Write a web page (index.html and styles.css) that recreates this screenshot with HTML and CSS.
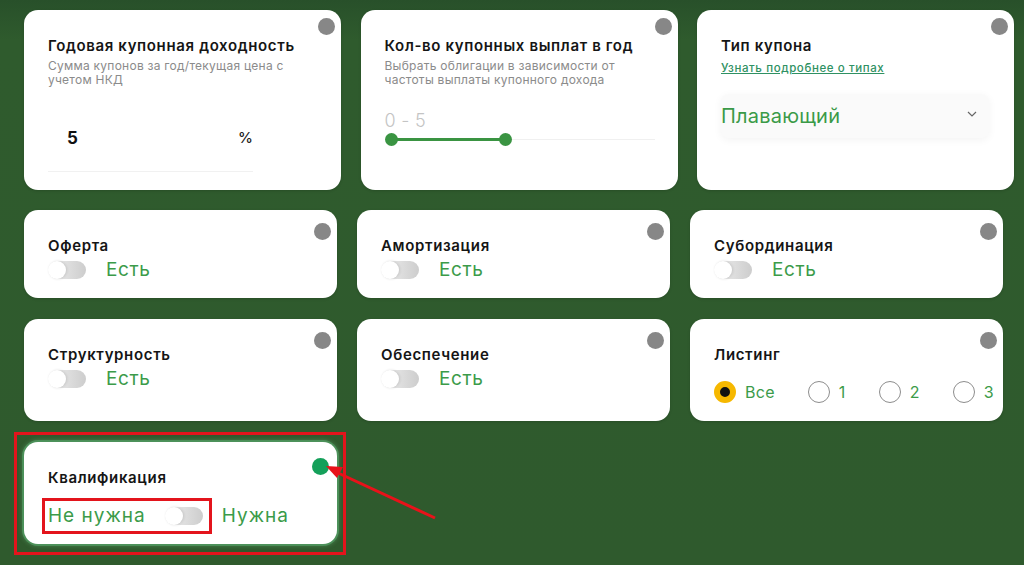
FILE: index.html
```html
<!DOCTYPE html>
<html lang="ru">
<head>
<meta charset="utf-8">
<title>Фильтры облигаций</title>
<link rel="stylesheet" href="styles.css">
</head>
<body>
<main class="page">
  <section class="row row-top">
    <div class="card card-tall">
      <span class="dot"></span>
      <h3 class="title">Годовая купонная доходность</h3>
      <p class="sub">Сумма купонов за год/текущая цена с учетом НКД</p>
      <div class="field"><span class="field-val">5</span><span class="field-unit">%</span></div>
    </div>
    <div class="card card-tall">
      <span class="dot"></span>
      <h3 class="title">Кол-во купонных выплат в год</h3>
      <p class="sub">Выбрать облигации в зависимости от частоты выплаты купонного дохода</p>
      <div class="range-label">0 - 5</div>
      <div class="slider">
        <span class="thumb"></span><span class="fill"></span><span class="thumb"></span><span class="rest"></span>
      </div>
    </div>
    <div class="card card-tall">
      <span class="dot"></span>
      <h3 class="title">Тип купона</h3>
      <a class="link" href="#">Узнать подробнее о типах</a>
      <div class="select">
        <span class="select-val">Плавающий</span>
        <svg class="chev" width="10" height="6" viewBox="0 0 10 6"><path d="M1 1l4 4 4-4" fill="none" stroke="#666" stroke-width="1.2"/></svg>
      </div>
    </div>
  </section>

  <section class="row row-mid">
    <div class="card card-short">
      <span class="dot dot-mid"></span>
      <h3 class="title">Оферта</h3>
      <div class="toggle-row"><span class="toggle"><span class="knob"></span></span><span class="g-text">Есть</span></div>
    </div>
    <div class="card card-short">
      <span class="dot dot-mid"></span>
      <h3 class="title">Амортизация</h3>
      <div class="toggle-row"><span class="toggle"><span class="knob"></span></span><span class="g-text">Есть</span></div>
    </div>
    <div class="card card-short">
      <span class="dot dot-mid"></span>
      <h3 class="title">Субординация</h3>
      <div class="toggle-row"><span class="toggle"><span class="knob"></span></span><span class="g-text">Есть</span></div>
    </div>

    <div class="card card-med">
      <span class="dot dot-mid"></span>
      <h3 class="title">Структурность</h3>
      <div class="toggle-row"><span class="toggle"><span class="knob"></span></span><span class="g-text">Есть</span></div>
    </div>
    <div class="card card-med">
      <span class="dot dot-mid"></span>
      <h3 class="title">Обеспечение</h3>
      <div class="toggle-row"><span class="toggle"><span class="knob"></span></span><span class="g-text">Есть</span></div>
    </div>
    <div class="card card-med">
      <span class="dot dot-mid"></span>
      <h3 class="title">Листинг</h3>
      <div class="radios">
        <label class="radio"><span class="circle on"></span><span class="g-text r-text">Все</span></label>
        <label class="radio"><span class="circle"></span><span class="g-text r-text">1</span></label>
        <label class="radio"><span class="circle"></span><span class="g-text r-text">2</span></label>
        <label class="radio"><span class="circle"></span><span class="g-text r-text">3</span></label>
      </div>
    </div>

    <div class="card card-med card-glow">
      <span class="dot dot-green"></span>
      <h3 class="title">Квалификация</h3>
      <div class="toggle-row toggle-row-q">
        <span class="g-text q-text">Не нужна</span>
        <span class="toggle"><span class="knob"></span></span>
        <span class="g-text q-text">Нужна</span>
      </div>
    </div>
  </section>

  <div class="mark mark-card"></div>
  <div class="mark mark-toggle"></div>
  <svg class="arrow" width="1024" height="565" viewBox="0 0 1024 565">
    <line x1="435" y1="518" x2="336" y2="472" stroke="#e8121a" stroke-width="3"/>
    <polygon points="326,466 343,467 337,478" fill="#e8121a"/>
  </svg>
</main>
</body>
</html>
```

FILE: styles.css
```css
* { box-sizing: border-box; }
html, body { margin: 0; padding: 0; }
body {
  width: 1024px;
  height: 565px;
  overflow: hidden;
  background: #2e5a2c;
  font-family: "Inter", "Noto Sans", sans-serif;
  color: #1b1b1b;
}
.page {
  position: relative;
  width: 1024px;
  height: 565px;
  padding: 10px 0 0 24px;
  background: linear-gradient(#28502a 0, #2f5b2d 40px, #2f5a2d 100%);
}
.row { display: grid; }
.row-top {
  grid-template-columns: repeat(3, 317px);
  column-gap: 19.5px;
  margin-bottom: 20px;
}
.row-mid {
  grid-template-columns: repeat(3, 313px);
  column-gap: 20px;
  row-gap: 21px;
}
.card {
  position: relative;
  background: #fff;
  border-radius: 14px;
  padding: 27px 24px 0 24px;
  box-shadow: 0 1px 3px rgba(0,0,0,0.15);
}
.card-tall { height: 180px; }
.card-short { height: 88px; }
.card-med { height: 102px; }
.card-glow { box-shadow: 0 0 0 2px rgba(88,170,110,0.55), 0 0 4px 2px rgba(120,200,140,0.35); }

.dot {
  position: absolute;
  top: 8px;
  right: 6px;
  width: 17px;
  height: 17px;
  border-radius: 50%;
  background: #878787;
}
.dot-mid { top: 13px; }
.dot-green { top: 16px; right: 8px; background: #14a05a; }

.title {
  margin: 0;
  font-size: 15px;
  line-height: 18px;
  font-weight: 600;
  color: #151515;
  letter-spacing: 0.65px;
}
.sub {
  margin: 4px 0 0;
  font-size: 12px;
  line-height: 14px;
  color: #8b8b8b;
  letter-spacing: 0.25px;
  width: 262px;
}
.field {
  margin-top: 30px;
  width: 205px;
  height: 55px;
  padding: 12px 1px 0 19px;
  display: flex;
  justify-content: space-between;
  border-bottom: 1px solid #f1f1f1;
  font-size: 16px;
  line-height: 18px;
}
.field-val { font-weight: 700; color: #111; font-size: 17px; }
.field-unit { font-weight: 500; color: #222; font-size: 15px; padding-right: 1px; margin-right: -2px; }

.range-label {
  margin-top: 23px;
  font-size: 18px;
  line-height: 22px;
  font-weight: 300;
  color: #c4c4c4;
  letter-spacing: 0.3px;
}
.slider {
  margin-top: 1px;
  width: 270px;
  height: 13px;
  display: flex;
  align-items: center;
}
.thumb {
  flex: none;
  width: 13px;
  height: 13px;
  border-radius: 50%;
  background: #3a9442;
}
.fill { flex: none; width: 107px; height: 3px; background: #3a9442; margin: 0 -3px; }
.rest { flex: 1; height: 1px; background: #f0f0f0; }

.link {
  display: block;
  margin-top: 6px;
  font-size: 11.5px;
  line-height: 14px;
  font-weight: 500;
  color: #2f9163;
  text-decoration: underline;
  letter-spacing: 0.6px;
}
.select {
  margin-top: 19px;
  width: 268px;
  height: 44px;
  border-radius: 8px;
  background: #fafafa;
  box-shadow: 0 2px 8px rgba(0,0,0,0.05);
  display: flex;
  align-items: center;
  justify-content: space-between;
  padding: 0 12px 0 0;
}
.select-val { font-size: 20px; color: #3a9a48; font-weight: 400; letter-spacing: 0.2px; }
.chev { margin-top: -4px; }

.g-text { font-size: 19px; line-height: 22px; color: #3b9b49; letter-spacing: 0.6px; }
.q-text { letter-spacing: 1px; }
.toggle-row {
  margin-top: 4px;
  display: flex;
  align-items: center;
  gap: 20px;
}
.toggle {
  position: relative;
  flex: none;
  width: 38px;
  height: 18px;
  border-radius: 9px;
  background: linear-gradient(90deg, #f0f0f0, #cdcdcd);
}
.knob {
  position: absolute;
  left: 0;
  top: 0;
  width: 18px;
  height: 18px;
  border-radius: 50%;
  background: #fff;
  box-shadow: 1px 0 3px rgba(0,0,0,0.12);
}
.toggle-row-q { margin-top: 18px; gap: 19px; }

.radios {
  margin-top: 17px;
  display: flex;
  align-items: center;
  gap: 33px;
}
.radio { display: flex; align-items: center; gap: 9px; }
.circle {
  flex: none;
  width: 22px;
  height: 22px;
  border-radius: 50%;
  border: 1px solid #8d8d8d;
  background: #fff;
}
.circle.on { border: 6px solid #f6b800; background: #111; }
.r-text { font-size: 16px; letter-spacing: 0.3px; }

.mark {
  position: absolute;
  border: 3px solid #e3141c;
  pointer-events: none;
}
.mark-card { left: 14px; top: 432px; width: 332px; height: 123px; }
.mark-toggle { left: 42px; top: 498px; width: 170px; height: 36px; }
.arrow { position: absolute; left: 0; top: 0; pointer-events: none; }
```
